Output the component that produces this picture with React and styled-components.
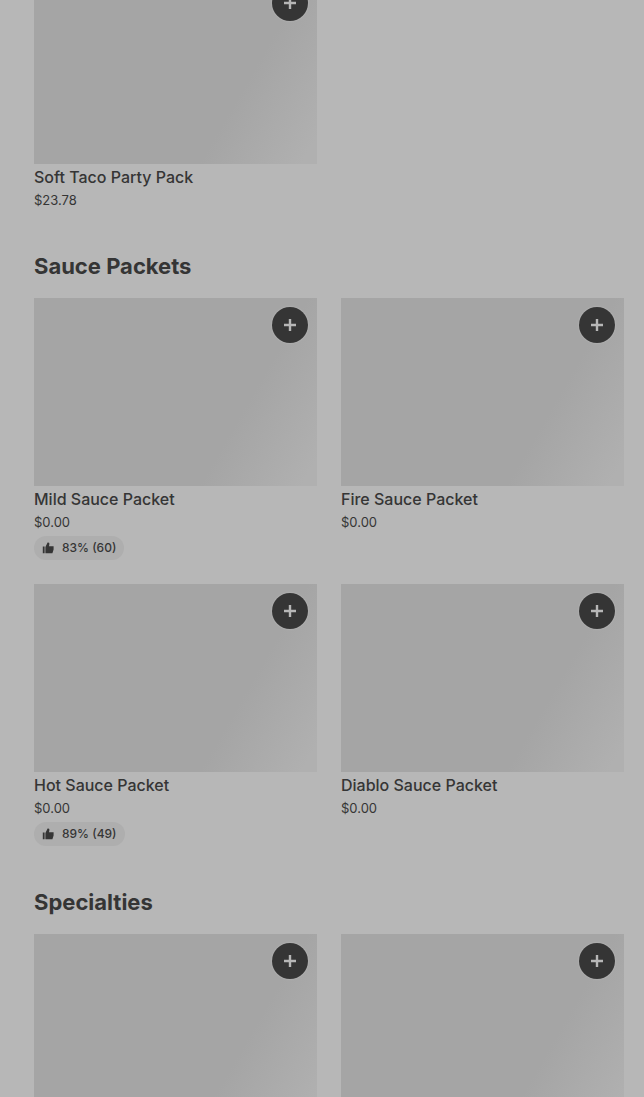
import React, { useState } from "react";
import styled, { createGlobalStyle } from "styled-components";

const GlobalStyle = createGlobalStyle`
  * {
    box-sizing: border-box;
  }
  body {
    margin: 0;
    background: #b7b7b7;
    color: #353535;
    font-family: Inter, "Liberation Sans", sans-serif;
  }
  h2, h3, p, ul {
    margin: 0;
    padding: 0;
  }
`;

const Viewport = styled.main`
  height: 100vh;
  overflow: hidden;
`;

// the menu is scrolled part way into its first row
const Menu = styled.div`
  display: flex;
  flex-direction: column;
  gap: 40px;
  margin-top: -24px;
  padding: 0 20px 40px 34px;
`;

const Section = styled.section`
  display: flex;
  flex-direction: column;
  gap: 16px;
`;

const SectionTitle = styled.h2`
  font-size: 22px;
  line-height: 32px;
  font-weight: 700;
`;

const Grid = styled.ul`
  display: grid;
  grid-template-columns: repeat(2, 1fr);
  gap: 24px;
  list-style: none;
`;

const Card = styled.li`
  display: flex;
  flex-direction: column;
  align-items: flex-start;
`;

const Photo = styled.div`
  position: relative;
  width: 100%;
  height: 188px;
  background: linear-gradient(120deg, #a5a5a5 70%, #b0b0b0 96%);
`;

const AddButton = styled.button`
  position: absolute;
  top: 9px;
  right: 9px;
  display: flex;
  align-items: center;
  justify-content: center;
  width: 36px;
  height: 36px;
  padding: 0;
  border: 0;
  border-radius: 50%;
  background: ${(props) => (props.$added ? "#1f1f1f" : "#353535")};
  color: #b7b7b7;
  box-shadow: 0 0 2px rgba(255, 255, 255, 0.3);
  cursor: pointer;
`;

const ItemTitle = styled.h3`
  margin-top: 2px;
  font-size: 16px;
  line-height: 22px;
  font-weight: 500;
`;

const Price = styled.p`
  margin-top: 2px;
  font-size: 13px;
  line-height: 20px;
`;

const Rating = styled.div`
  display: flex;
  align-items: center;
  gap: 8px;
  height: 24px;
  margin-top: 4px;
  padding: 0 8px;
  border-radius: 12px;
  background: #aeaeae;
  font-size: 12px;
  line-height: 20px;
  font-weight: 500;
`;

const PlusIcon = () => (
  <svg width="12" height="12" viewBox="0 0 12 12" aria-hidden="true">
    <path
      d="M4.8 0h2.4v4.8H12v2.4H7.2V12H4.8V7.2H0V4.8h4.8z"
      fill="currentColor"
    />
  </svg>
);

const ThumbIcon = () => (
  <svg width="12" height="12" viewBox="0 0 12 12" aria-hidden="true">
    <path
      d="M0.8 4.5H2.6V11.3H0.8zM3.4 5L5.6 0.4H6.3Q7.6 0.6 7.4 1.9L7 4.2H11.6V7.4L10.4 11.3H3.4z"
      fill="currentColor"
    />
  </svg>
);

const sections = [
  {
    id: "party",
    items: [{ id: 1, title: "Soft Taco Party Pack", price: "$23.78" }],
  },
  {
    id: "sauce",
    title: "Sauce Packets",
    items: [
      { id: 2, title: "Mild Sauce Packet", price: "$0.00", rating: "83% (60)" },
      { id: 3, title: "Fire Sauce Packet", price: "$0.00" },
      { id: 4, title: "Hot Sauce Packet", price: "$0.00", rating: "89% (49)" },
      { id: 5, title: "Diablo Sauce Packet", price: "$0.00" },
    ],
  },
  {
    id: "specialties",
    title: "Specialties",
    items: [{ id: 6 }, { id: 7 }],
  },
];

const MenuItem = ({ item }) => {
  const [added, setAdded] = useState(false);

  return (
    <Card>
      <Photo>
        <AddButton
          type="button"
          aria-label="Add item"
          aria-pressed={added}
          $added={added}
          onClick={() => setAdded(!added)}
        >
          <PlusIcon />
        </AddButton>
      </Photo>
      {item.title && <ItemTitle>{item.title}</ItemTitle>}
      {item.price && <Price>{item.price}</Price>}
      {item.rating && (
        <Rating>
          <ThumbIcon />
          {item.rating}
        </Rating>
      )}
    </Card>
  );
};

const App = () => (
  <>
    <GlobalStyle />
    <Viewport>
      <Menu>
        {sections.map((section) => (
          <Section key={section.id}>
            {section.title && <SectionTitle>{section.title}</SectionTitle>}
            <Grid>
              {section.items.map((item) => (
                <MenuItem key={item.id} item={item} />
              ))}
            </Grid>
          </Section>
        ))}
      </Menu>
    </Viewport>
  </>
);

export default App;
